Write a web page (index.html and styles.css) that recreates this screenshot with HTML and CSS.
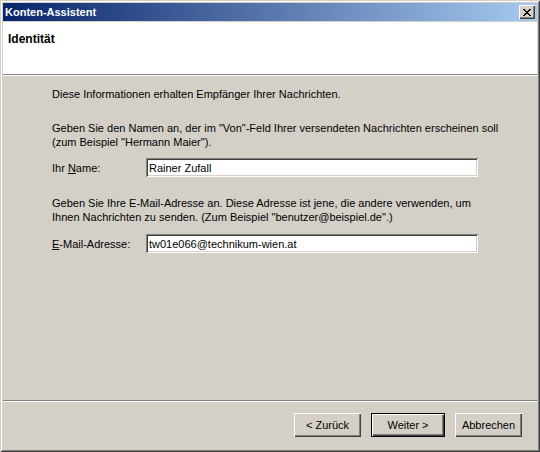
FILE: index.html
```html
<!DOCTYPE html>
<html lang="de">
<head>
<meta charset="utf-8">
<title>Konten-Assistent</title>
<link rel="stylesheet" href="styles.css">
</head>
<body>
<div class="window">
  <div class="titlebar">
    <span class="title">Konten-Assistent</span>
    <span class="close">
      <svg width="8" height="7" viewBox="0 0 8 7" shape-rendering="crispEdges">
        <path d="M0 0h2v1H0zM6 0h2v1H6zM1 1h2v1H1zM5 1h2v1H5zM2 2h4v1H2zM3 3h2v1H3zM2 4h4v1H2zM1 5h2v1H1zM5 5h2v1H5zM0 6h2v1H0zM6 6h2v1H6z" fill="#000"/>
      </svg>
    </span>
  </div>
  <div class="client">
    <div class="header">
      <span class="heading">Identität</span>
    </div>
    <div class="content">
      <p class="intro">Diese Informationen erhalten Empfänger Ihrer Nachrichten.</p>
      <p class="para-name">Geben Sie den Namen an, der im "Von"-Feld Ihrer versendeten Nachrichten erscheinen soll<br>(zum Beispiel "Hermann Maier").</p>
      <div class="row row-name">
        <span class="label">Ihr <u>N</u>ame:</span>
        <span class="field">Rainer Zufall</span>
      </div>
      <p class="para-mail">Geben Sie Ihre E-Mail-Adresse an. Diese Adresse ist jene, die andere verwenden, um<br>Ihnen Nachrichten zu senden. (Zum Beispiel "benutzer@beispiel.de".)</p>
      <div class="row row-mail">
        <span class="label"><u>E</u>-Mail-Adresse:</span>
        <span class="field">tw01e066@technikum-wien.at</span>
      </div>
    </div>
    <div class="footer">
      <span class="btn btn-back">&lt; Zurück</span>
      <span class="btn btn-next btn-default">Weiter &gt;</span>
      <span class="btn btn-cancel">Abbrechen</span>
    </div>
  </div>
</div>
</body>
</html>
```
FILE: styles.css
```css
html, body {
  margin: 0;
  padding: 0;
  background: #d4d0c8;
}

body {
  font-family: "Liberation Sans", Arial, sans-serif;
  font-size: 11px;
  color: #000;
}

.window {
  box-sizing: border-box;
  width: 540px;
  height: 452px;
  padding: 3px;
  background: #d4d0c8;
  box-shadow:
    inset 1px 1px 0 #d4d0c8,
    inset -1px -1px 0 #404040,
    inset 2px 2px 0 #ffffff,
    inset -2px -2px 0 #808080;
  display: flex;
  flex-direction: column;
}

.titlebar {
  height: 18px;
  flex: none;
  display: flex;
  align-items: center;
  padding: 0 2px;
  background: linear-gradient(to right, #0a246a, #a6caf0);
}

.title {
  color: #fff;
  font-weight: bold;
  font-size: 11px;
  line-height: 13px;
}

.close {
  margin-left: auto;
  box-sizing: border-box;
  width: 16px;
  height: 14px;
  background: #d4d0c8;
  display: flex;
  align-items: center;
  justify-content: center;
  padding: 0 1px 0 0;
  box-shadow:
    inset 1px 1px 0 #ffffff,
    inset -1px -1px 0 #404040,
    inset -2px -2px 0 #808080;
}

.close svg {
  display: block;
}

.client {
  flex: 1;
  margin-top: 1px;
  display: flex;
  flex-direction: column;
}

.header {
  flex: none;
  box-sizing: border-box;
  height: 53px;
  background: #fff;
  border-bottom: 1px solid #808080;
  box-shadow: 0 1px 0 #fff;
  padding: 10px 0 0 5px;
}

.heading {
  font-weight: bold;
  font-size: 12px;
  line-height: 14px;
}

.content {
  flex: 1;
  margin-top: 1px;
  padding: 11px 0 0 49px;
  border-bottom: 1px solid #808080;
  box-shadow: 0 1px 0 #fff;
}

.content p {
  margin: 0;
  line-height: 14px;
  white-space: nowrap;
}

.para-name {
  margin-top: 20px !important;
}

.para-mail {
  margin-top: 19px !important;
}

.row {
  display: flex;
  align-items: center;
}

.row-name {
  margin-top: 9px;
}

.row-mail {
  margin-top: 10px;
}

.label {
  width: 94px;
  flex: none;
}

.label u {
  text-decoration: underline;
  text-underline-offset: 1px;
}

.field {
  box-sizing: border-box;
  width: 332px;
  height: 19px;
  background: #fff;
  display: flex;
  align-items: center;
  padding: 0 0 0 3px;
  box-shadow:
    inset 1px 1px 0 #808080,
    inset -1px -1px 0 #ffffff,
    inset 2px 2px 0 #404040,
    inset -2px -2px 0 #d4d0c8;
}

.footer {
  flex: none;
  height: 47px;
  margin-top: 1px;
  box-sizing: border-box;
  padding: 11px 15px 0 0;
  display: flex;
  justify-content: flex-end;
  align-items: flex-start;
  gap: 10px;
}

.btn {
  box-sizing: border-box;
  height: 24px;
  display: flex;
  align-items: center;
  justify-content: center;
  background: #d4d0c8;
  box-shadow:
    inset 1px 1px 0 #ffffff,
    inset -1px -1px 0 #404040,
    inset -2px -2px 0 #808080;
}

.btn-back {
  width: 67px;
}

.btn-next {
  width: 74px;
}

.btn-cancel {
  width: 67px;
}

.btn-default {
  box-shadow:
    inset 0 0 0 1px #000,
    inset 2px 2px 0 #ffffff,
    inset -2px -2px 0 #404040,
    inset -3px -3px 0 #808080;
}
```
